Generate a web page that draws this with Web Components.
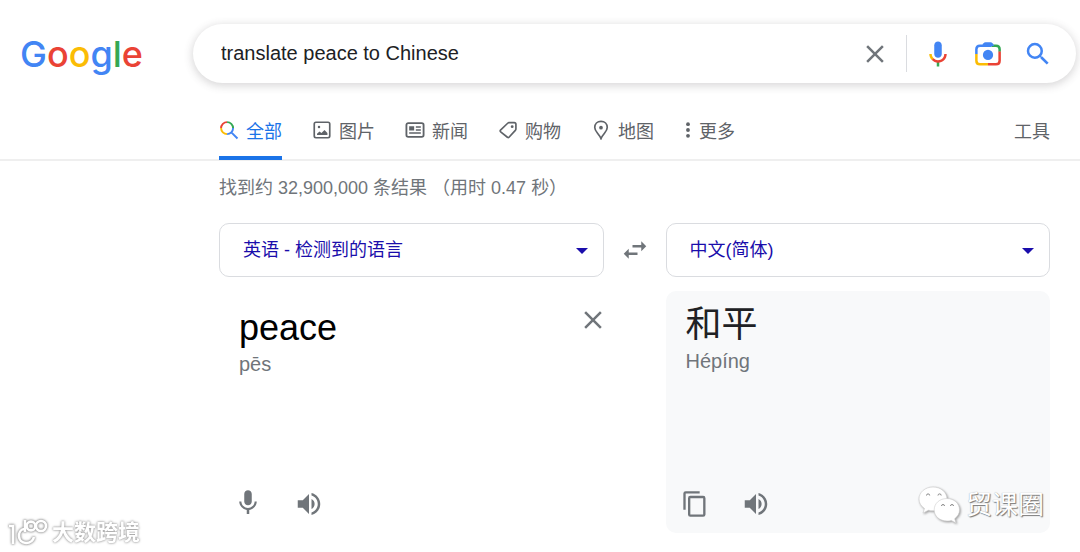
<!DOCTYPE html>
<html lang="zh-CN">
<head>
<meta charset="utf-8">
<meta name="viewport" content="width=device-width, initial-scale=1">
<title>translate peace to Chinese - Google</title>
<style>
    body {
        margin: 0;
        background: #fff;
        color: #202124;
        font-family: "Liberation Sans", "Noto Sans CJK SC", sans-serif;
        font-size: 18px;
    }
</style>
</head>
<body>

<search-page></search-page>

<script>
const ICONS = {
    close: '<path d="M19 6.41 17.59 5 12 10.59 6.41 5 5 6.41 10.59 12 5 17.59 6.41 19 12 13.41 17.59 19 19 17.59 13.41 12z"/>',
    voice: `<path fill="#4285f4" d="M12 15c1.66 0 3-1.31 3-2.97V5.01C15 3.35 13.66 2 12 2S9 3.34 9 5.01v7.02C9 13.69 10.34 15 12 15z"/>
        <path fill="#34a853" d="M11 18.08h2V22h-2z"/>
        <path fill="#fbbc04" d="M7.05 16.87C5.78 15.54 5 14.04 5 12h2c0 1.45.56 2.42 1.47 3.38v.32l-1.15 1.18z"/>
        <path fill="#ea4335" d="M12 16.93a4.97 5.25 0 0 1-3.54-1.55l-1.41 1.49C8.31 18.21 10.07 19 12 19c3.87 0 6.99-2.92 6.99-7H17c0 2.92-2.24 4.93-5 4.93z"/>`,
    lens: `<g fill="none" stroke-width="2">
        <path stroke="#4285f4" d="M2.7 12V8.2Q2.7 5.3 5.6 5.3H15"/>
        <path stroke="#34a853" d="M15 5.3h3.4q2.9 0 2.9 2.9v2"/>
        <path stroke="#ea4335" d="M21.3 10v7.3q0 2.9-2.9 2.9H12"/>
        <path stroke="#fbbc04" d="M2.7 12v5.3q0 2.9 2.9 2.9H12"/></g>
        <path fill="#4285f4" d="M7 5.6 8.4 3.4Q9 2.6 10 2.6h4q1 0 1.6.8L17 5.6z"/>
        <circle cx="12" cy="12.7" r="4.1" fill="#4285f4"/>`,
    search: '<path fill="#4285f4" d="M15.5 14h-.79l-.28-.27A6.47 6.47 0 0 0 16 9.5 6.5 6.5 0 1 0 9.5 16c1.61 0 3.09-.59 4.23-1.57l.27.28v.79l5 4.99L20.49 19l-4.99-5zm-6 0a4.5 4.5 0 1 1 0-9 4.5 4.5 0 0 1 0 9z"/>',
    all: `<g fill="none" stroke-width="2.3">
        <path stroke="#ea4335" d="M2.5 9.7a7.2 7.2 0 0 1 7.2-7.2"/>
        <path stroke="#34a853" d="M9.7 2.5a7.2 7.2 0 0 1 7.2 7.2"/>
        <path stroke="#fbbc04" d="M2.5 9.7a7.2 7.2 0 0 0 7.2 7.2"/>
        <path stroke="#4285f4" d="M9.7 16.9a7.2 7.2 0 0 0 7.2-7.2M14.8 14.8l7.4 7.4"/></g>`,
    image: `<rect x="2.7" y="2.7" width="18.6" height="18.6" rx="2" fill="none" stroke="currentColor" stroke-width="2"/>
        <circle cx="8.4" cy="8.5" r="1.5"/>
        <path d="M6 18v-1.5l3-2.6 2.3 1.8 3.7-3.6 3.5 3.6V18z"/>`,
    news: `<rect x="1.7" y="3.7" width="20.6" height="16.6" rx="2.2" fill="none" stroke="currentColor" stroke-width="2.2"/>
        <path d="M5 7.5h6v5H5zM13 7.5h6v1.8h-6zM13 11h6v1.8h-6zM5 14.8h14v1.8H5z"/>`,
    tag: `<path fill="none" stroke="currentColor" stroke-width="2" stroke-linejoin="round" d="M13.2 3.2h6.3q2 0 2 2v5.6q0 1-.7 1.7l-7.6 8.2q-.9.9-1.9 0l-8.1-6.5q-1.2-1-.2-2.1l8.6-8.2q.7-.7 1.6-.7z"/>
        <circle cx="17" cy="8" r="1.7"/>`,
    pin: `<path fill="none" stroke="currentColor" stroke-width="2" d="M12 1.7C7.5 1.7 4.5 4.9 4.5 9c0 5 4.8 7 7.5 13.3C14.7 16 19.5 14 19.5 9c0-4.1-3-7.3-7.5-7.3z"/>
        <circle cx="12" cy="9.2" r="2.2"/>`,
    more: '<circle cx="12" cy="5" r="2.3"/><circle cx="12" cy="12" r="2.3"/><circle cx="12" cy="19" r="2.3"/>',
    swap: '<path d="M6.99 11 3 15l3.99 4v-3H14v-2H6.99zM21 9l-3.99-4v3H10v2h7.01v3z"/>',
    mic: '<path d="M12 13c1.66 0 3-1.34 3-3V4c0-1.66-1.34-3-3-3S9 2.34 9 4v6c0 1.66 1.34 3 3 3zM17.3 10c0 3-2.54 5.1-5.3 5.1S6.7 13 6.7 10H5c0 3.41 2.72 6.23 6 6.72V20h2v-3.28c3.28-.48 6-3.3 6-6.72z"/>',
    volume: '<path d="M3 9v6h4l5 5V4L7 9zM16.5 12A4.5 4.5 0 0 0 14 7.97v8.05c1.48-.73 2.5-2.25 2.5-4.02zM14 3.23v2.06c2.89.86 5 3.54 5 6.71s-2.11 5.85-5 6.71v2.06c4.01-.91 7-4.49 7-8.77s-2.99-7.86-7-8.77z"/>',
    copy: '<path d="M16 1H4a2 2 0 0 0-2 2v14h2V3h12zM19 5H8a2 2 0 0 0-2 2v14a2 2 0 0 0 2 2h11a2 2 0 0 0 2-2V7a2 2 0 0 0-2-2zm0 16H8V7h11z"/>'
};

class PageIcon extends HTMLElement {
    connectedCallback() {
        this.attachShadow({ mode: 'open' }).innerHTML = `
        <style>
            :host {
                display: block;
                flex: none;
                width: var(--icon-size, 30px);
                height: var(--icon-size, 30px);
            }
            svg {
                display: block;
                width: 100%;
                height: 100%;
                fill: currentColor;
            }
        </style>
        <svg viewBox="0 0 24 24" aria-hidden="true">${ICONS[this.getAttribute('name')]}</svg>
        `;
    }
}

class IconButton extends HTMLElement {
    connectedCallback() {
        this.attachShadow({ mode: 'open' }).innerHTML = `
        <style>
            :host { display: block; flex: none; }
            button {
                display: flex;
                align-items: center;
                justify-content: center;
                width: var(--button-width, 50px);
                height: 40px;
                padding: 0;
                border: 0;
                background: none;
                color: #70757a;
                cursor: pointer;
            }
        </style>
        <button type="button" aria-label="${this.getAttribute('label')}">
            <page-icon name="${this.getAttribute('icon')}"></page-icon>
        </button>
        `;
    }
}

class SiteLogo extends HTMLElement {
    connectedCallback() {
        this.attachShadow({ mode: 'open' }).innerHTML = `
        <style>
            :host { display: block; }
            a {
                font: 500 36px/44px Inter, sans-serif;
                text-decoration: none;
            }
            .blue { color: #4285f4; }
            .red { color: #ea4335; }
            .yellow { color: #fbbc05; }
            .green { color: #34a853; }
        </style>
        <a class="blue" href="#">G<span class="red">o</span><span class="yellow">o</span>g<span class="green">l</span><span class="red">e</span></a>
        `;
    }
}

class SearchBox extends HTMLElement {
    connectedCallback() {
        this.attachShadow({ mode: 'open' }).innerHTML = `
        <style>
            :host { display: block; }
            form {
                display: flex;
                align-items: center;
                height: 59px;
                padding: 0 13px 0 28px;
                border-radius: 30px;
                background: #fff;
                box-shadow: 0 2px 8px 1px rgba(64, 60, 67, 0.2);
                box-sizing: border-box;
            }
            input {
                flex: 1;
                min-width: 0;
                padding: 0;
                border: 0;
                outline: 0;
                background: none;
                color: #202124;
                font: inherit;
                font-size: 20px;
            }
            .divider {
                width: 1px;
                height: 37px;
                margin: 0 6px;
                background: #dadce0;
            }
        </style>
        <form role="search">
            <input type="text" aria-label="搜索" value="${this.getAttribute('query')}">
            <icon-button icon="close" label="清除"></icon-button>
            <div class="divider"></div>
            <icon-button icon="voice" label="语音搜索"></icon-button>
            <icon-button icon="lens" label="按图搜索"></icon-button>
            <icon-button icon="search" label="搜索"></icon-button>
        </form>
        `;
    }
}

class NavTab extends HTMLElement {
    connectedCallback() {
        const icon = this.getAttribute('icon');
        this.attachShadow({ mode: 'open' }).innerHTML = `
        <style>
            :host { display: block; --icon-size: 20px; }
            a {
                display: flex;
                align-items: center;
                gap: 7px;
                height: 100%;
                box-sizing: border-box;
                border-bottom: 4px solid transparent;
                color: #5f6368;
                text-decoration: none;
                white-space: nowrap;
            }
            :host([active]) a {
                color: #1a73e8;
                border-color: #1a73e8;
            }
            :host([icon="more"]) page-icon { margin: 0 -6px; }
        </style>
        <a href="#">${icon ? `<page-icon name="${icon}"></page-icon>` : ''}<slot></slot></a>
        `;
    }
}

class NavTabs extends HTMLElement {
    connectedCallback() {
        this.attachShadow({ mode: 'open' }).innerHTML = `
        <style>
            :host { display: block; }
            nav {
                display: flex;
                gap: 30px;
                height: 57px;
                padding: 0 30px 0 219px;
                box-shadow: inset 0 -1px #efefef, 0 1px #efefef;
            }
            ::slotted([slot="tools"]) { margin-left: auto; }
        </style>
        <nav><slot></slot><slot name="tools"></slot></nav>
        `;
    }
}

class LangSelect extends HTMLElement {
    connectedCallback() {
        this.attachShadow({ mode: 'open' }).innerHTML = `
        <style>
            :host { display: block; position: relative; }
            select {
                display: block;
                width: 100%;
                height: 54px;
                padding: 0 48px 0 23px;
                border: 1px solid #dadce0;
                border-radius: 10px;
                background: #fff;
                color: #1a0dab;
                font: inherit;
                appearance: none;
            }
            /* arrow painted over the select */
            .arrow {
                position: absolute;
                right: 16px;
                top: 25px;
                border: 6px solid transparent;
                border-top-color: #1a0dab;
                border-bottom: 0;
                pointer-events: none;
            }
        </style>
        <select aria-label="${this.getAttribute('label')}">
            <option>${this.getAttribute('value')}</option>
        </select>
        <span class="arrow"></span>
        `;
    }
}

class TextPanel extends HTMLElement {
    connectedCallback() {
        this.attachShadow({ mode: 'open' }).innerHTML = `
        <style>
            :host {
                display: flex;
                flex-direction: column;
                justify-content: space-between;
                position: relative;
                min-height: 242px;
                padding: 12px 20px 9px;
                box-sizing: border-box;
                border-radius: 10px;
                --button-width: 30px;
            }
            :host([filled]) { background: #f8f9fa; }
            .row { display: flex; }
            .text { flex: 1; min-width: 0; }
            .sound {
                color: #70757a;
                font-size: 20px;
                line-height: 28px;
            }
            .tools {
                display: flex;
                gap: 31px;
                margin-left: -6px;
            }
        </style>
        <div class="row">
            <div class="text">
                <slot></slot>
                <div class="sound">${this.getAttribute('sound')}</div>
            </div>
            <slot name="action"></slot>
        </div>
        <div class="tools"><slot name="tools"></slot></div>
        <slot name="mark"></slot>
        `;
    }
}

class TranslateCard extends HTMLElement {
    connectedCallback() {
        this.attachShadow({ mode: 'open' }).innerHTML = `
        <style>
            :host {
                display: grid;
                grid-template-columns: minmax(0, 1fr) 62px minmax(0, 1fr);
                row-gap: 14px;
            }
            .swap { justify-self: center; align-self: center; }
            .target { grid-column: 3; }
            textarea, .result {
                display: block;
                width: 100%;
                height: 44px;
                padding: 0;
                border: 0;
                outline: 0;
                resize: none;
                overflow: hidden;
                background: none;
                font: inherit;
                font-size: 36px;
                line-height: 44px;
            }
            textarea { color: #000; }
            .source { padding-top: 15px; }
            .clear { margin: -6px -24px 0 0; }
            .copy { --icon-size: 28px; }
        </style>
        <lang-select label="源语言" value="英语 - 检测到的语言"></lang-select>
        <icon-button class="swap" icon="swap" label="交换语言"></icon-button>
        <lang-select label="目标语言" value="中文(简体)"></lang-select>
        <text-panel class="source" sound="pēs">
            <textarea aria-label="原文" rows="1" spellcheck="false">peace</textarea>
            <icon-button class="clear" slot="action" icon="close" label="清除原文"></icon-button>
            <icon-button slot="tools" icon="mic" label="语音输入"></icon-button>
            <icon-button slot="tools" icon="volume" label="朗读原文"></icon-button>
        </text-panel>
        <text-panel class="target" sound="Hépíng" filled>
            <div class="result">和平</div>
            <icon-button class="copy" slot="tools" icon="copy" label="复制"></icon-button>
            <icon-button slot="tools" icon="volume" label="朗读译文"></icon-button>
            <channel-mark slot="mark">贸课圈</channel-mark>
        </text-panel>
        `;
    }
}

class ChannelMark extends HTMLElement {
    connectedCallback() {
        this.attachShadow({ mode: 'open' }).innerHTML = `
        <style>
            :host {
                position: absolute;
                right: 6px;
                bottom: 8px;
                display: flex;
                align-items: center;
                gap: 6px;
                color: #fff;
                font-size: 26px;
                line-height: 40px;
                text-shadow: 1px 1px 1px #777, 0 0 1px #999;
                pointer-events: none;
            }
            svg {
                width: 42px;
                height: 38px;
                filter: drop-shadow(1px 1px 1px #999);
            }
        </style>
        <svg viewBox="0 0 42 38" aria-hidden="true">
            <g fill="#fff" stroke="#ccc" stroke-width=".6">
                <path d="M15 1C7 1 1 6.5 1 13c0 4 2 7 5.5 9.5L5 27l5.5-2.8c1.5.5 3 .6 4.5.6 8 0 14-5.3 14-11.8S23 1 15 1z"/>
                <path d="M29 12.5c-7.5 0-12.8 5-12.8 11.3S21.5 35 29 35c1.5 0 3-.2 4.3-.6L38 37l-1.3-4.3c3-2.2 4.8-5.2 4.8-8.9 0-6.3-5.5-11.3-12.5-11.3z"/>
            </g>
            <path fill="none" stroke="#888" d="M8.5 9.5a1.6 1.6 0 0 1 3.2 0M20 9.5a1.6 1.6 0 0 1 3.2 0M23.5 20a1.5 1.5 0 0 1 3 0M32.5 20a1.5 1.5 0 0 1 3 0"/>
        </svg>
        <slot></slot>
        `;
    }
}

class SiteMark extends HTMLElement {
    connectedCallback() {
        this.attachShadow({ mode: 'open' }).innerHTML = `
        <style>
            :host {
                position: fixed;
                left: 8px;
                bottom: 3px;
                display: flex;
                align-items: center;
                gap: 4px;
                color: #fff;
                font-size: 22px;
                font-weight: bold;
                line-height: 32px;
                text-shadow: 0 0 2px #999, 0 0 3px #aaa;
                pointer-events: none;
            }
            svg {
                width: 40px;
                height: 30px;
                filter: drop-shadow(0 0 1px #888) drop-shadow(0 0 1px #bbb);
            }
        </style>
        <svg viewBox="0 0 40 30" fill="none" stroke="#fff" stroke-width="2.6" aria-hidden="true">
            <path d="M1 8h4v18M16 11c-7 1-7 14 2 14 4 0 7-2 8-6M17 14V2"/>
            <circle cx="23" cy="8" r="4.4"/>
            <circle cx="33" cy="8" r="5"/>
        </svg>
        <slot></slot>
        `;
    }
}

class SearchPage extends HTMLElement {
    connectedCallback() {
        this.attachShadow({ mode: 'open' }).innerHTML = `
        <style>
            :host { display: block; }
            header {
                display: grid;
                grid-template-columns: 173px minmax(0, 1fr);
                align-items: center;
                padding: 24px 4px 0 20px;
            }
            nav-tabs { margin-top: 20px; }
            main { padding: 14px 30px 19px 219px; }
            .stats {
                margin: 0 0 21px;
                color: #70757a;
                line-height: 28px;
            }
        </style>
        <header>
            <site-logo></site-logo>
            <search-box query="translate peace to Chinese"></search-box>
        </header>
        <nav-tabs>
            <nav-tab icon="all" active>全部</nav-tab>
            <nav-tab icon="image">图片</nav-tab>
            <nav-tab icon="news">新闻</nav-tab>
            <nav-tab icon="tag">购物</nav-tab>
            <nav-tab icon="pin">地图</nav-tab>
            <nav-tab icon="more">更多</nav-tab>
            <nav-tab slot="tools">工具</nav-tab>
        </nav-tabs>
        <main>
            <p class="stats">找到约 32,900,000 条结果 （用时 0.47 秒）</p>
            <translate-card></translate-card>
        </main>
        <site-mark>大数跨境</site-mark>
        `;
    }
}

customElements.define('page-icon', PageIcon);
customElements.define('icon-button', IconButton);
customElements.define('site-logo', SiteLogo);
customElements.define('search-box', SearchBox);
customElements.define('nav-tab', NavTab);
customElements.define('nav-tabs', NavTabs);
customElements.define('lang-select', LangSelect);
customElements.define('text-panel', TextPanel);
customElements.define('channel-mark', ChannelMark);
customElements.define('site-mark', SiteMark);
customElements.define('translate-card', TranslateCard);
customElements.define('search-page', SearchPage);
</script>
</body>
</html>
